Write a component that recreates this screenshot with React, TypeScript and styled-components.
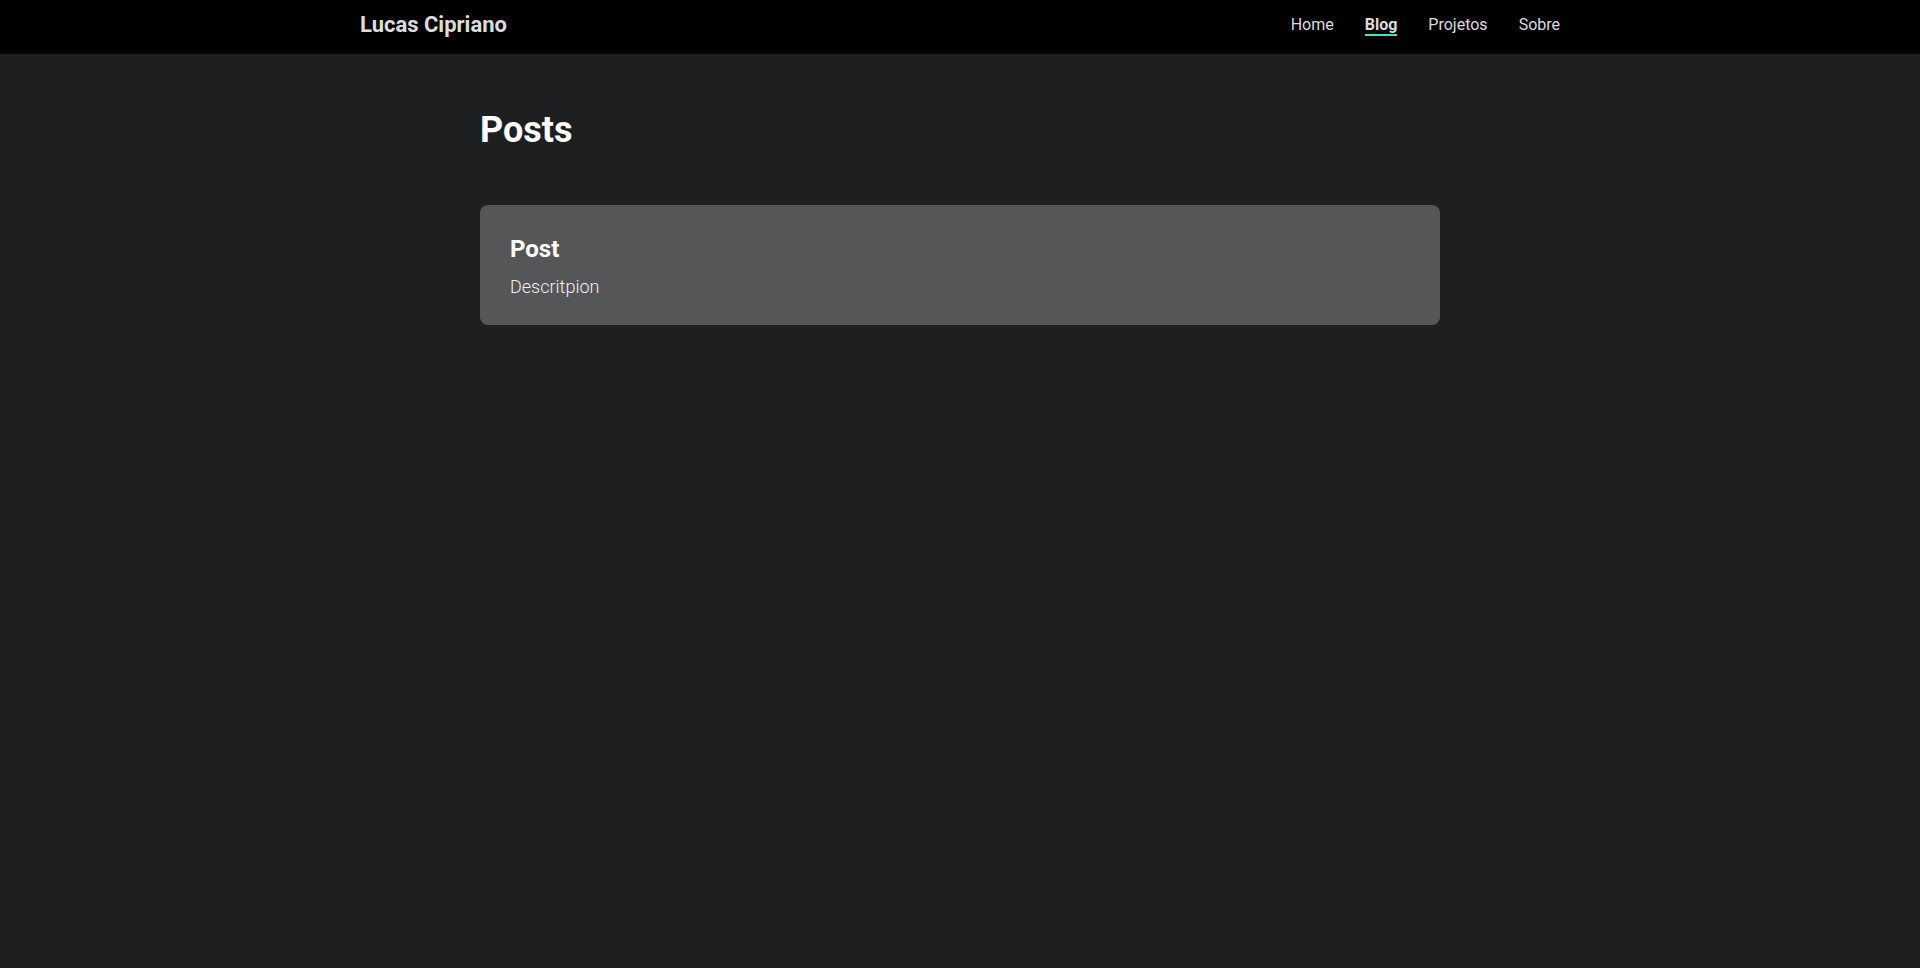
import React from "react";
import styled, { createGlobalStyle } from "styled-components";

const Global = createGlobalStyle`
  html, body { margin: 0; padding: 0; }
  body {
    background: #1e1f21;
    font-family: Roboto, "Liberation Sans", sans-serif;
    color: #ffffff;
    min-height: 968px;
  }
`;

const Header = styled.header`
  background: #000000;
  height: 54px;
  display: flex;
  justify-content: center;
`;

const HeaderInner = styled.div`
  width: 1200px;
  display: flex;
  align-items: center;
  justify-content: space-between;
  padding-bottom: 3px;
`;

const Logo = styled.a`
  font-size: 22px;
  font-weight: 700;
  color: #dcdcdc;
  text-decoration: none;
  margin-bottom: 3px;
`;

const Nav = styled.nav`
  display: flex;
  gap: 31px;
`;

const NavLink = styled.a<{ $active?: boolean }>`
  font-size: 16px;
  color: #dcdcdc;
  text-decoration: none;
  font-weight: ${(p) => (p.$active ? 700 : 400)};
  border-bottom: 2px solid ${(p) => (p.$active ? "#3fe6c0" : "transparent")};
`;

const Main = styled.main`
  width: 960px;
  margin: 0 auto;
  padding-top: 55px;
`;

const Title = styled.h1`
  font-size: 36px;
  font-weight: 700;
  margin: 0 0 54px;
  color: #ffffff;
`;

const Card = styled.article`
  background: #555658;
  border-radius: 8px;
  padding: 30px 30px 28px;
  display: flex;
  flex-direction: column;
  gap: 13px;
`;

const CardTitle = styled.h2`
  font-size: 24px;
  font-weight: 700;
  margin: 0;
  color: #ffffff;
`;

const CardDesc = styled.p`
  font-size: 18px;
  font-weight: 300;
  margin: 0;
  color: #f0f0f0;
`;

export default function App() {
  return (
    <>
      <Global />
      <Header>
        <HeaderInner>
          <Logo href="#">Lucas Cipriano</Logo>
          <Nav>
            <NavLink href="#">Home</NavLink>
            <NavLink href="#" $active>Blog</NavLink>
            <NavLink href="#">Projetos</NavLink>
            <NavLink href="#">Sobre</NavLink>
          </Nav>
        </HeaderInner>
      </Header>
      <Main>
        <Title>Posts</Title>
        <Card>
          <CardTitle>Post</CardTitle>
          <CardDesc>Descritpion</CardDesc>
        </Card>
      </Main>
    </>
  );
}
